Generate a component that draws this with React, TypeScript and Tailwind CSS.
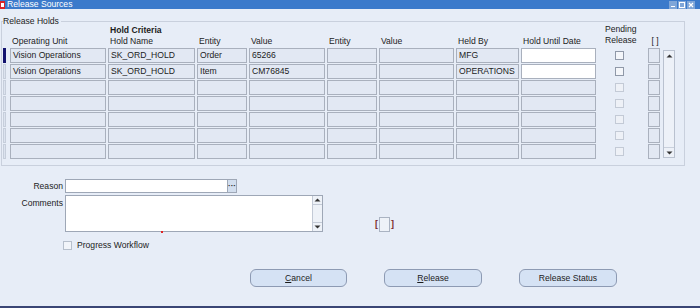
import React from "react";

const font = { fontFamily: '"Liberation Sans", Arial, sans-serif' };

const widths = [
  "w-[96px]",
  "w-[87px]",
  "w-[50px]",
  "w-[76px]",
  "w-[50px]",
  "w-[75px]",
  "w-[63px]",
  "w-[75px]",
];

const headers = [
  "Operating Unit",
  "Hold Name",
  "Entity",
  "Value",
  "Entity",
  "Value",
  "Held By",
  "Hold Until Date",
];

const rows = [
  ["Vision Operations", "SK_ORD_HOLD", "Order", "65266", "", "", "MFG", ""],
  ["Vision Operations", "SK_ORD_HOLD", "Item", "CM76845", "", "", "OPERATIONS", ""],
  ["", "", "", "", "", "", "", ""],
  ["", "", "", "", "", "", "", ""],
  ["", "", "", "", "", "", "", ""],
  ["", "", "", "", "", "", "", ""],
  ["", "", "", "", "", "", "", ""],
];

const Arrow = ({ down }: { down?: boolean }) => (
  <svg width="7" height="4" viewBox="0 0 7 4">
    {down ? (
      <path d="M0.5 0.5H6.5L3.5 3.5Z" fill="#333" />
    ) : (
      <path d="M0.5 3.5H6.5L3.5 0.5Z" fill="#333" />
    )}
  </svg>
);

const Check = ({ enabled }: { enabled: boolean }) => (
  <div
    className={`w-[9px] h-[9px] border ${
      enabled ? "border-[#8f98a8] bg-[#f4f6fa]" : "border-[#c3cad6] bg-[#eef1f7]"
    }`}
  />
);

export default function App() {
  return (
    <div
      className="w-[700px] h-[308px] bg-[#e7edf7] text-[#1c1c1c] text-[8.6px] leading-[11px] flex flex-col border-b-[2px] border-[#3a4675] overflow-hidden"
      style={font}
    >
      {/* Title bar */}
      <div className="h-[9px] bg-[#3b7acb] flex items-center">
        <svg width="5" height="8" viewBox="0 0 5 8" className="ml-0">
          <rect x="0" y="0" width="5" height="8" fill="#d8262a" />
          <rect x="1" y="2" width="3" height="4" fill="#fff" />
        </svg>
        <span className="ml-[2px] text-white leading-[9px]">Release Sources</span>
        <div className="ml-auto mr-[5px] flex gap-[1px]">
          <svg width="8" height="8" viewBox="0 0 8 8">
            <rect width="8" height="8" fill="#7fa6d8" />
            <rect x="2" y="5" width="4" height="1" fill="#fff" />
          </svg>
          <svg width="8" height="8" viewBox="0 0 8 8">
            <rect width="8" height="8" fill="#7fa6d8" />
            <rect x="1.5" y="1.5" width="5" height="5" fill="none" stroke="#fff" />
          </svg>
          <svg width="8" height="8" viewBox="0 0 8 8">
            <rect width="8" height="8" fill="#7fa6d8" />
            <path d="M2 2L6 6M6 2L2 6" stroke="#fff" strokeWidth="1.2" />
          </svg>
        </div>
      </div>

      {/* Release Holds frame */}
      <div className="relative mt-[12px] ml-[1px] w-[684px] h-[145px] border border-[#c9d0dd]">
        <span className="absolute left-[1px] top-[-6px] bg-[#e7edf7] pr-[2px]">Release Holds</span>

        {/* Header */}
        <div className="flex items-end mt-[1px] h-[24px]">
          <div className="w-[9px]" />
          <div className="flex gap-[2px] items-end">
            {headers.map((h, i) => (
              <div key={i} className={`${widths[i]} pl-[1px]`}>
                {i === 1 && <div className="font-bold">Hold Criteria</div>}
                <div>{h}</div>
              </div>
            ))}
            <div className="w-[48px] pl-[6px] mb-[1px]">
              <div>Pending</div>
              <div>Release</div>
            </div>
            <div className="w-[12px] text-center">[ ]</div>
          </div>
        </div>

        {/* Body */}
        <div className="flex mt-[1px]">
          <div className="flex flex-col gap-[1px]">
            {rows.map((r, ri) => (
              <div key={ri} className="flex h-[15px]">
                <div
                  className={`ml-[1px] mr-[4px] w-[3px] h-[15px] ${
                    ri === 0 ? "bg-[#12126e]" : "bg-[#dce3ef] border border-[#c6cedb]"
                  }`}
                />
                <div className="flex gap-[2px]">
                  {r.map((c, ci) => (
                    <div
                      key={ci}
                      className={`${widths[ci]} h-[15px] border border-[#a9b0bd] px-[2px] leading-[13px] whitespace-nowrap overflow-hidden ${
                        ci === 7 && ri < 2 ? "bg-white" : "bg-[#e2e8f3]"
                      }`}
                    >
                      {c}
                    </div>
                  ))}
                  <div className="w-[48px] flex items-center pl-[17px]">
                    <Check enabled={ri < 2} />
                  </div>
                  <div className="w-[12px] h-[15px] border border-[#aab1be] bg-[#e2e8f3]" />
                </div>
              </div>
            ))}
          </div>
          <div className="ml-[3px] mt-[2px] w-[12px] h-[108px] border border-[#b9c1cf] bg-[#edf1f8] flex flex-col justify-between items-center">
            <div className="w-full h-[10px] flex items-center justify-center">
              <Arrow />
            </div>
            <div className="w-full h-[10px] flex items-center justify-center border-t border-[#c9d0dc]">
              <Arrow down />
            </div>
          </div>
        </div>
      </div>

      {/* Reason / Comments */}
      <div className="mt-[13px] flex items-center h-[14px]">
        <div className="w-[63px] text-right">Reason</div>
        <div className="ml-[2px] w-[163px] h-[14px] bg-white border border-[#9ea7b6]" />
        <div className="w-[9px] h-[14px] bg-[#d2deee] border border-[#9ea7b6] border-l-0 flex items-center justify-center text-[8px] font-bold leading-[8px]">
          ···
        </div>
      </div>

      <div className="mt-[2px] flex items-end">
        <div className="w-[63px] text-right self-start pt-[3px]">Comments</div>
        <div className="relative ml-[2px] w-[258px] h-[37px] bg-white border border-[#9ea7b6] flex justify-end">
          <div className="w-[10px] h-full bg-[#eef2f8] border-l border-[#c3cad6] flex flex-col justify-between items-center">
            <div className="h-[9px] w-full flex items-center justify-center border-b border-[#c3cad6]">
              <Arrow />
            </div>
            <div className="h-[9px] w-full flex items-center justify-center border-t border-[#c3cad6]">
              <Arrow down />
            </div>
          </div>
          <span className="absolute left-[95px] bottom-[-2px] w-[2px] h-[2px] bg-[#e02424]" />
        </div>
        <div className="ml-[52px] flex items-center h-[15px] gap-[1px]">
          <span className="text-[#7a2a2a] text-[9px] font-bold leading-[9px]">[</span>
          <div className="w-[11px] h-[15px] border border-[#aab3c2] bg-[#eef2f8]" />
          <span className="text-[#7a2a2a] text-[9px] font-bold leading-[9px]">]</span>
        </div>
      </div>

      {/* Progress Workflow */}
      <div className="mt-[8px] ml-[63px] flex items-center gap-[5px] h-[10px]">
        <div className="w-[9px] h-[9px] border border-[#b6bfcc] bg-[#f1f4f9]" />
        <span>Progress Workflow</span>
      </div>

      {/* Buttons */}
      <div className="mt-[19px] ml-[250px] flex gap-[37px]">
        {[
          ["C", "ancel"],
          ["R", "elease"],
          ["", "Release Status"],
        ].map(([u, rest], i) => (
          <div
            key={i}
            className={`${i === 0 ? "w-[97px]" : "w-[98px]"} h-[18px] rounded-[6px] border border-[#8d9ab3] bg-[#d5e2f4] flex items-center justify-center`}
          >
            <span>
              {u && <span className="underline">{u}</span>}
              {rest}
            </span>
          </div>
        ))}
      </div>
    </div>
  );
}
